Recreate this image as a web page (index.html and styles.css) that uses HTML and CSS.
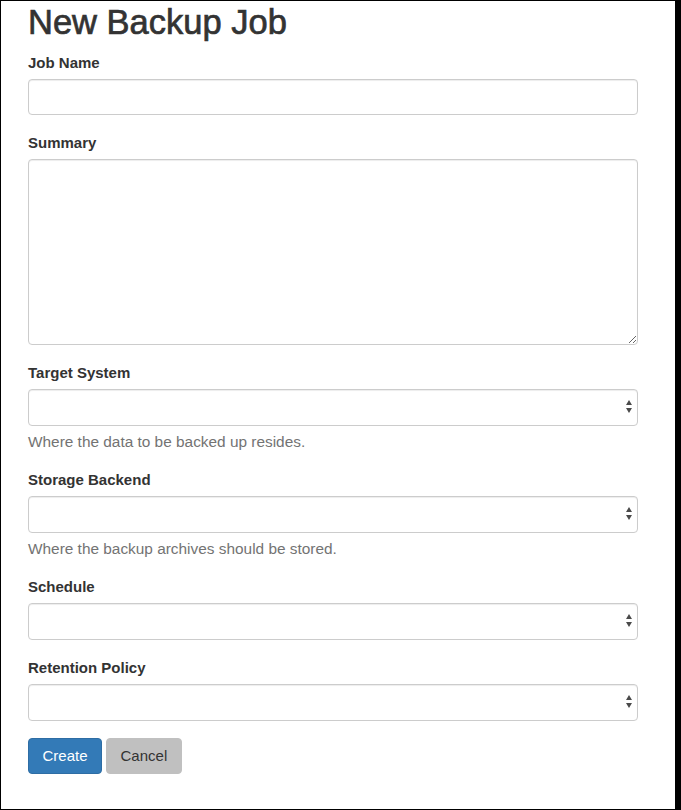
FILE: index.html
```html
<!DOCTYPE html>
<html lang="en">
<head>
<meta charset="utf-8">
<title>New Backup Job</title>
<link rel="stylesheet" href="styles.css">
</head>
<body>
<div class="page">
  <h1 class="title">New Backup Job</h1>
  <form class="form">
    <div class="group">
      <label class="label" for="name">Job Name</label>
      <input class="control" id="name" type="text">
    </div>
    <div class="group">
      <label class="label" for="summary">Summary</label>
      <textarea class="control textarea" id="summary"></textarea>
    </div>
    <div class="group">
      <label class="label" for="target">Target System</label>
      <div class="select-wrap"><select class="control select" id="target"><option></option></select></div>
      <p class="help">Where the data to be backed up resides.</p>
    </div>
    <div class="group">
      <label class="label" for="storage">Storage Backend</label>
      <div class="select-wrap"><select class="control select" id="storage"><option></option></select></div>
      <p class="help">Where the backup archives should be stored.</p>
    </div>
    <div class="group">
      <label class="label" for="schedule">Schedule</label>
      <div class="select-wrap"><select class="control select" id="schedule"><option></option></select></div>
    </div>
    <div class="group">
      <label class="label" for="retention">Retention Policy</label>
      <div class="select-wrap"><select class="control select" id="retention"><option></option></select></div>
    </div>
    <div class="actions">
      <button class="btn btn-primary" type="button">Create</button>
      <button class="btn btn-default" type="button">Cancel</button>
    </div>
  </form>
</div>
</body>
</html>
```

FILE: styles.css
```css
html, body {
  margin: 0;
  padding: 0;
  background: #fff;
}

body {
  font-family: "Liberation Sans", Arial, Helvetica, sans-serif;
  color: #333;
}

.page {
  box-sizing: border-box;
  width: 681px;
  height: 810px;
  border: 1px solid #000;
  border-right: 6px solid #000;
  padding: 2px 37px 0 27px;
  overflow: hidden;
}

.title {
  margin: 0 0 11px 0;
  font-size: 34.5px;
  line-height: 38px;
  font-weight: 400;
  color: #333;
  -webkit-text-stroke: 0.7px #333;
}

.form {
  margin: 0;
}

.group {
  margin-bottom: 17px;
}

.label {
  display: block;
  font-size: 15px;
  line-height: 21px;
  font-weight: 700;
  margin-bottom: 6px;
  color: #333;
}

.control {
  display: block;
  box-sizing: border-box;
  width: 100%;
  height: 36px;
  margin: 0;
  padding: 6px 12px;
  font-family: inherit;
  font-size: 15px;
  color: #555;
  background: #fff;
  border: 1px solid #ccc;
  border-radius: 4px;
  box-shadow: inset 0 1px 1px rgba(0, 0, 0, 0.075);
  outline: none;
}

.textarea {
  height: 186px;
  resize: vertical;
}

.select-wrap {
  position: relative;
}

.select {
  height: 37px;
  -webkit-appearance: none;
  appearance: none;
}

.select-wrap::before,
.select-wrap::after {
  content: "";
  position: absolute;
  right: 6px;
  width: 0;
  height: 0;
  border-left: 3.5px solid transparent;
  border-right: 3.5px solid transparent;
  pointer-events: none;
}

.select-wrap::before {
  top: 11px;
  border-bottom: 5px solid #4a4a4a;
}

.select-wrap::after {
  top: 19px;
  border-top: 5px solid #4a4a4a;
}

.help {
  margin: 5px 0 10px 0;
  font-size: 15.4px;
  line-height: 21px;
  color: #737373;
}

.actions {
  display: flex;
  gap: 4px;
}

.btn {
  box-sizing: border-box;
  height: 36px;
  padding: 0 13.5px;
  font-family: inherit;
  font-size: 15px;
  line-height: 34px;
  border: 1px solid transparent;
  border-radius: 4px;
  cursor: pointer;
}

.btn-primary {
  background: #337ab7;
  border-color: #2e6da4;
  color: #fff;
}

.btn-default {
  background: #c0c0c0;
  border-color: #c0c0c0;
  color: #333;
}
```
